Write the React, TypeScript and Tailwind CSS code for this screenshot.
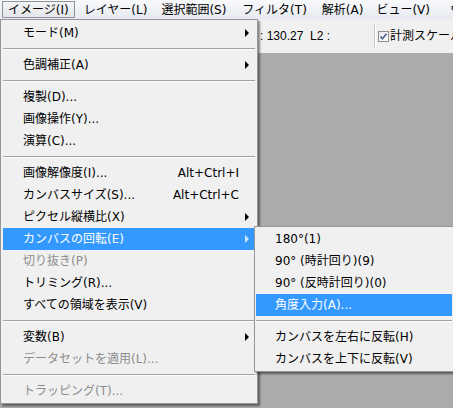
import React from "react";

type Item =
  | { sep: true }
  | {
      sep?: false;
      label: string;
      shortcut?: string;
      arrow?: boolean;
      disabled?: boolean;
      active?: boolean;
    };

const mainItems: Item[] = [
  { label: "モード(M)", arrow: true },
  { sep: true },
  { label: "色調補正(A)", arrow: true },
  { sep: true },
  { label: "複製(D)..." },
  { label: "画像操作(Y)..." },
  { label: "演算(C)..." },
  { sep: true },
  { label: "画像解像度(I)...", shortcut: "Alt+Ctrl+I" },
  { label: "カンバスサイズ(S)...", shortcut: "Alt+Ctrl+C" },
  { label: "ピクセル縦横比(X)", arrow: true },
  { label: "カンバスの回転(E)", arrow: true, active: true },
  { label: "切り抜き(P)", disabled: true },
  { label: "トリミング(R)..." },
  { label: "すべての領域を表示(V)" },
  { sep: true },
  { label: "変数(B)", arrow: true },
  { label: "データセットを適用(L)...", disabled: true },
  { sep: true },
  { label: "トラッピング(T)...", disabled: true },
];

const subItems: Item[] = [
  { label: "180°(1)" },
  { label: "90° (時計回り)(9)" },
  { label: "90° (反時計回り)(0)" },
  { label: "角度入力(A)...", active: true },
  { sep: true },
  { label: "カンバスを左右に反転(H)" },
  { label: "カンバスを上下に反転(V)" },
];

const font = { fontFamily: '"DejaVu Sans", "Noto Sans CJK JP", sans-serif' };
const tbFont = { fontFamily: '"Liberation Sans", "Noto Sans CJK JP", sans-serif' };

function Sep() {
  return (
    <div className="h-[10px] flex flex-col justify-center">
      <div className="h-px bg-[#a0a0a0]" />
      <div className="h-px bg-white" />
    </div>
  );
}

function Row({ item, sub }: { item: Item; sub?: boolean }) {
  if (item.sep) return <Sep />;
  const color = item.active
    ? "text-white"
    : item.disabled
    ? "text-[#8d8d8d]"
    : "text-black";
  return (
    <div
      className={`h-[22px] flex items-center ${sub ? "pl-[19px]" : "pl-[20px]"} ${
        item.active ? "bg-[#3399ff]" : ""
      } ${color}`}
    >
      <span className="flex-1 whitespace-nowrap">{item.label}</span>
      {item.shortcut && <span className="whitespace-nowrap">{item.shortcut}</span>}
      {!sub && (
        <span className="w-[16px] shrink-0 flex items-center">
          {item.arrow && (
            <span
              className={`ml-[6px] w-0 h-0 border-y-[4px] border-y-transparent border-l-[4px] ${
                item.active ? "border-l-[#cfe6ff]" : "border-l-black"
              }`}
            />
          )}
        </span>
      )}
    </div>
  );
}

export default function App() {
  const bar = [
    { t: "レイヤー(L)", c: "ml-[2px]" },
    { t: "選択範囲(S)", c: "ml-0" },
    { t: "フィルタ(T)", c: "ml-[2px]" },
    { t: "解析(A)", c: "ml-[1px]" },
    { t: "ビュー(V)", c: "-ml-[1px]" },
    { t: "ウ", c: "ml-[6px]" },
  ];
  return (
    <div
      className="relative w-[453px] h-[408px] overflow-hidden bg-[#ababab] text-[12px] leading-none"
      style={font}
    >
      {/* menu bar */}
      <div className="h-[19px] flex items-center pl-[2px] bg-gradient-to-b from-[#f8f9fb] to-[#e6eaf0] whitespace-nowrap">
        <div className="h-[17px] shrink-0 flex items-center px-[5px] border border-[#8f949b] bg-gradient-to-b from-[#f4f5f7] to-[#e3e6ea] text-black">
          イメージ(I)
        </div>
        {bar.map((b) => (
          <div key={b.t} className={`h-[17px] shrink-0 flex items-center px-[6px] border border-transparent text-black ${b.c}`}>
            {b.t}
          </div>
        ))}
      </div>

      {/* toolbar */}
      <div className="h-[34px] flex items-center bg-[#f0f0f0] text-black whitespace-nowrap text-[12px]" style={tbFont}>
        <div className="w-[260px] shrink-0" />
        <span className="w-[50px] shrink-0">: 130.27</span>
        <span className="w-[64px] shrink-0">L2 :</span>
        <div className="shrink-0 w-[2px] h-[24px] bg-[#c8c8c8] border-r border-white" />
        <div className="ml-[2px] shrink-0 w-[11px] h-[11px] border border-[#8e8f8f] bg-gradient-to-br from-[#e8e8e8] to-white flex items-center justify-center">
          <svg width="9" height="9" viewBox="0 0 9 9">
            <path d="M1.5 4.5 L3.5 6.8 L7.5 1.8" fill="none" stroke="#4a5f8a" strokeWidth="1.6" />
          </svg>
        </div>
        <span className="ml-[1px] shrink-0" style={font}>計測スケール</span>
      </div>

      {/* main dropdown */}
      <div className="absolute left-0 top-[19px] w-[258px] h-[385px] bg-[#f0f0f0] border border-[#979797] pt-[2px] px-[2px] shadow-[2px_2px_2px_rgba(0,0,0,0.45)]">
        {mainItems.map((it, i) => (
          <Row key={i} item={it} />
        ))}
      </div>

      {/* submenu */}
      <div className="absolute left-[254px] top-[226px] w-[200px] h-[146px] bg-[#f0f0f0] border border-[#979797] pt-[1px] px-[1px] shadow-[2px_2px_2px_rgba(0,0,0,0.45)]">
        {subItems.map((it, i) => (
          <Row key={i} item={it} sub />
        ))}
      </div>
    </div>
  );
}
